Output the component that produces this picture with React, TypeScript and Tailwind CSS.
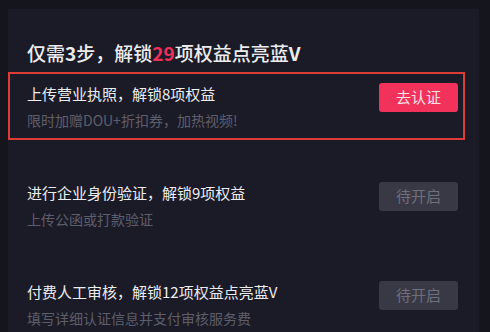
import React from "react";

interface Step {
  title: React.ReactNode;
  desc: string;
  action: string;
  active: boolean;
}

const steps: Step[] = [
  { title: "上传营业执照，解锁8项权益", desc: "限时加赠DOU+折扣券，加热视频!", action: "去认证", active: true },
  { title: "进行企业身份验证，解锁9项权益", desc: "上传公函或打款验证", action: "待开启", active: false },
  { title: "付费人工审核，解锁12项权益点亮蓝V", desc: "填写详细认证信息并支付审核服务费", action: "待开启", active: false },
];

export default function App() {
  return (
    <div
      className="w-[490px] h-[332px] overflow-hidden bg-[#15151e] pt-[9px] pl-[8px] pr-[11px]"
      style={{ fontFamily: '"Noto Sans CJK SC", "Noto Sans", sans-serif' }}
    >
      <div className="h-full bg-[#1b1b28]">
        <div className="pt-[30px] pl-[19px] h-[63px]">
          <h1 className="text-[19px] leading-[28px] font-medium text-[#ececee]">
            仅需<span className="font-bold">3</span>步，解锁
            <span className="font-bold text-[#f0305a]">29</span>项权益点亮蓝
            <span className="font-bold">V</span>
          </h1>
        </div>
        {steps.map((s, i) => (
          <div key={i} className="h-[99px]">
            <div
              className={
                "w-[457px] h-[68px] border-2 flex items-start justify-between pl-[17px] pr-[5px] pt-[9px] " +
                (s.active ? "border-[#dc3b37]" : "border-transparent")
              }
            >
              <div>
                <div className="text-[15px] leading-[22px] text-[#ededf0]">{s.title}</div>
                <div className="mt-[5px] text-[14px] leading-[20px] text-[#5e5e6a]">{s.desc}</div>
              </div>
              <button
                className={
                  "w-[79px] h-[29px] rounded-[3px] text-[15px] " +
                  (s.active ? "bg-[#f2325a] text-[#fbe4e9]" : "bg-[#393946] text-[#6f6f7b]")
                }
              >
                {s.action}
              </button>
            </div>
          </div>
        ))}
      </div>
    </div>
  );
}
